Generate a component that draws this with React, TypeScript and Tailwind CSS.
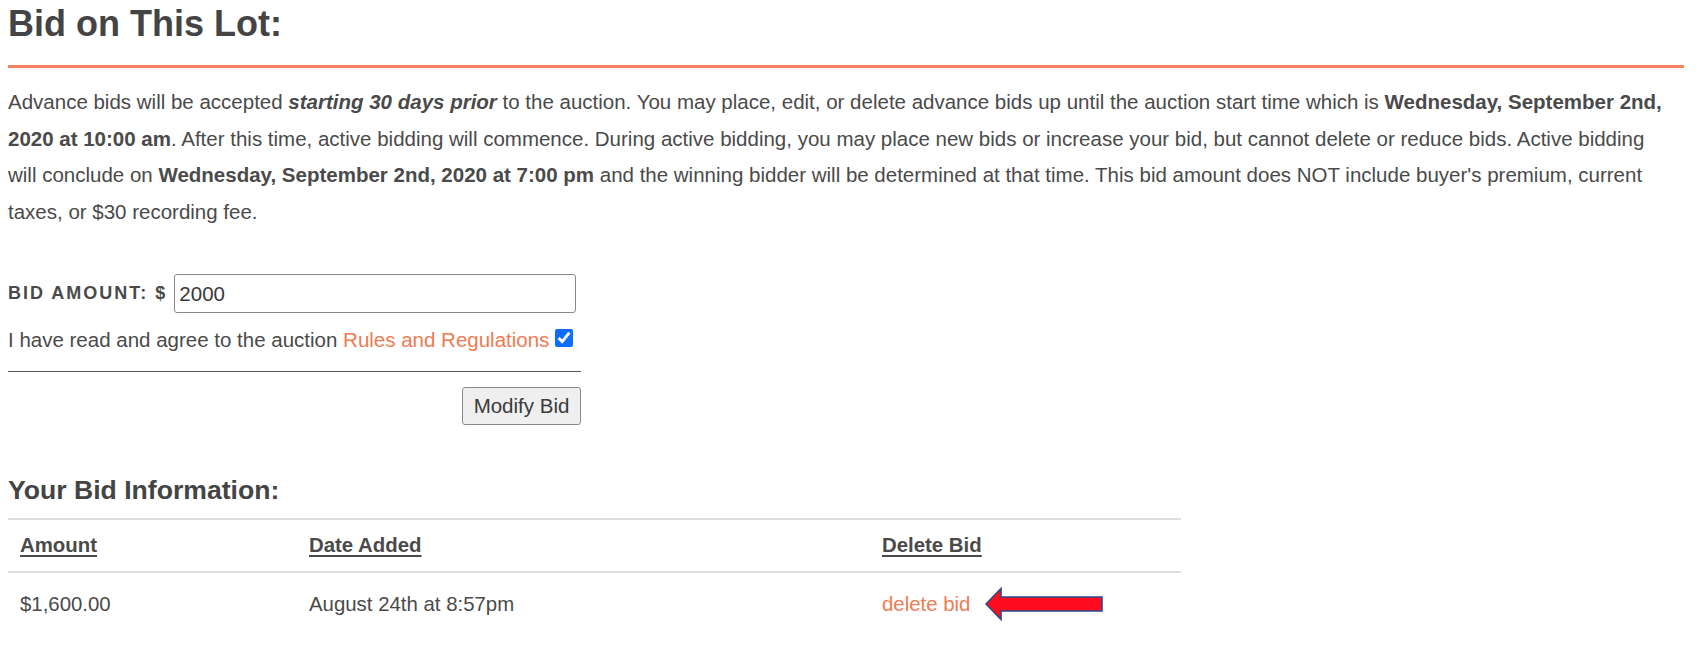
import React, { useState } from 'react';

const bids = [{ amount: '$1,600.00', added: 'August 24th at 8:57pm' }];

const RedArrow: React.FC = () => (
  <svg width="118" height="34" viewBox="0 0 118 34" className="ml-[15px] shrink-0">
    <polygon
      points="1,17 16,1.5 16,10 117,10 117,24 16,24 16,32.5"
      fill="#ff0c1f"
      stroke="#2e4a86"
      strokeWidth="1.6"
      strokeLinejoin="miter"
    />
  </svg>
);

const App: React.FC = () => {
  const [amount, setAmount] = useState<string>('2000');
  const [agreed, setAgreed] = useState<boolean>(true);

  return (
    <div className="min-h-screen bg-white pl-2 pr-[14px] font-['Liberation_Sans',Arial,sans-serif] text-[#4a4a4a]">
      <h2 className="pt-[4px] text-[36px] font-bold leading-[40px] text-[#444]">Bid on This Lot:</h2>
      <div className="mt-[21px] h-[3px] bg-[#f3845f]" />

      <p className="mt-[16px] pr-[8px] text-[20.5px] leading-[36.5px]">
        Advance bids will be accepted <b>
          <i>starting 30 days prior</i>
        </b>{' '}
        to the auction. You may place, edit, or delete advance bids up until the auction start time which is{' '}
        <b>Wednesday, September 2nd, 2020 at 10:00 am</b>. After this time, active bidding will commence. During
        active bidding, you may place new bids or increase your bid, but cannot delete or reduce bids. Active bidding
        will conclude on <b>Wednesday, September 2nd, 2020 at 7:00 pm</b> and the winning bidder will be determined at
        that time. This bid amount does NOT include buyer's premium, current taxes, or $30 recording fee.
      </p>

      <div className="mt-[44px] flex w-[573px] flex-col">
        <div className="flex h-[39px] items-center">
          <label className="mr-[7px] text-[18px] font-bold tracking-[2px] uppercase">Bid Amount: $</label>
          <input
            type="text"
            value={amount}
            onChange={(e) => setAmount(e.target.value)}
            className="h-[39px] w-[402px] rounded-[3px] border border-[#8a8a8a] bg-white px-[4px] text-[20.5px] text-[#3a3a3a] outline-none"
          />
        </div>

        <div className="mt-[15px] flex h-[24px] items-start text-[20.5px] leading-[24px]">
          <span>
            I have read and agree to the auction <a className="text-[#ef7b52]">Rules and Regulations</a>
          </span>
          <input
            type="checkbox"
            checked={agreed}
            onChange={(e) => setAgreed(e.target.checked)}
            className="ml-[6px] mt-[1px] h-[18px] w-[18px] accent-[#0b6efd]"
          />
        </div>

        <div className="mt-[19px] h-[1px] bg-[#555]" />

        <div className="mt-[15px] flex justify-end">
          <button className="h-[38px] w-[119px] rounded-[3px] border border-[#8a8a8a] bg-[#efefef] text-[20.5px] text-[#3a3a3a]">
            Modify Bid
          </button>
        </div>
      </div>

      <h3 className="mt-[50px] text-[26.6px] font-bold leading-[30px] text-[#444]">Your Bid Information:</h3>

      <table className="mt-[13px] w-[1173px] border-collapse text-left text-[20.4px] leading-[24px]">
        <thead>
          <tr className="border-y-2 border-[#dedede]">
            <th className="w-[289px] px-[12px] pt-[13px] pb-[14px] font-bold underline underline-offset-[3px]">Amount</th>
            <th className="w-[573px] px-[12px] pt-[13px] pb-[14px] font-bold underline underline-offset-[3px]">
              Date Added
            </th>
            <th className="w-[311px] px-[12px] pt-[13px] pb-[14px] font-bold underline underline-offset-[3px]">
              Delete Bid
            </th>
          </tr>
        </thead>
        <tbody>
          {bids.map((bid, index) => (
            <tr key={index}>
              <td className="px-[12px] pt-[14px] pb-[15px]">{bid.amount}</td>
              <td className="px-[12px] pt-[14px] pb-[15px]">{bid.added}</td>
              <td className="px-[12px] pt-[14px] pb-[15px]">
                <div className="flex items-center">
                  <a className="text-[#ef7b52]">delete bid</a>
                  <RedArrow />
                </div>
              </td>
            </tr>
          ))}
        </tbody>
      </table>
    </div>
  );
};

export default App;
